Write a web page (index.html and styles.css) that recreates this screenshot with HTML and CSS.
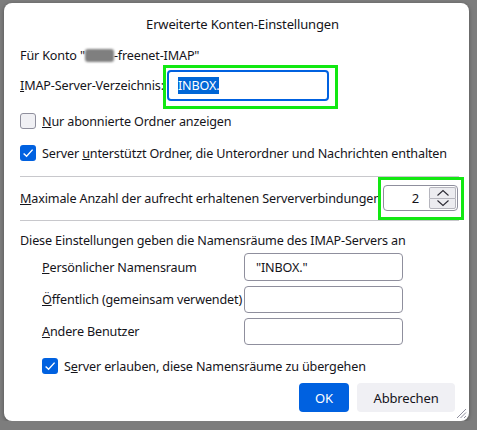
FILE: index.html
```html
<!DOCTYPE html>
<html>
<head>
    <title>Erweiterte Konten-Einstellungen</title>
    <link rel="stylesheet" href="styles.css">
</head>
<body>
    <div class="dialog">
        <div class="title">Erweiterte Konten-Einstellungen</div>

        <div class="row konto">Für Konto "<span class="blurred"></span>-freenet-IMAP"</div>

        <div class="row imap">
            <label class="imap-label"><u>I</u>MAP-Server-Verzeichnis:</label>
            <span class="marked marked-dir">
                <span class="text-input focused"><span class="selection">INBOX.</span></span>
            </span>
        </div>

        <div class="row check-row first">
            <span class="checkbox"></span>
            <span><u>N</u>ur abonnierte Ordner anzeigen</span>
        </div>

        <div class="row check-row second">
            <span class="checkbox checked">
                <svg viewBox="0 0 16 16" width="16" height="16"><path d="M3.6 8.4 L6.6 11.3 L12.6 4.6" fill="none" stroke="#fff" stroke-width="1.4"/></svg>
            </span>
            <span>Server <u>u</u>nterstützt Ordner, die Unterordner und Nachrichten enthalten</span>
        </div>

        <div class="separator first-sep"></div>

        <div class="row max-row">
            <span><u>M</u>aximale Anzahl der aufrecht erhaltenen Serververbindungen</span>
            <span class="marked marked-spin">
                <span class="spin">
                    <span class="spin-value">2</span>
                    <span class="spin-buttons">
                        <span class="spin-btn up">
                            <svg viewBox="0 0 14 8" width="14" height="8"><path d="M1.5 6.5 L7 1.5 L12.5 6.5" fill="none" stroke="#2b2a33" stroke-width="1.1"/></svg>
                        </span>
                        <span class="spin-btn down">
                            <svg viewBox="0 0 14 8" width="14" height="8"><path d="M1.5 1.5 L7 6.5 L12.5 1.5" fill="none" stroke="#2b2a33" stroke-width="1.1"/></svg>
                        </span>
                    </span>
                </span>
            </span>
        </div>

        <div class="separator second-sep"></div>

        <div class="row diese">Diese Einstellungen geben die Namensräume des IMAP-Servers an</div>

        <div class="namespaces">
            <label><u>P</u>ersönlicher Namensraum</label>
            <span class="text-input">"INBOX."</span>
            <label><u>Ö</u>ffentlich (gemeinsam verwendet)</label>
            <span class="text-input"></span>
            <label><u>A</u>ndere Benutzer</label>
            <span class="text-input"></span>
        </div>

        <div class="row check-row third">
            <span class="checkbox checked">
                <svg viewBox="0 0 16 16" width="16" height="16"><path d="M3.6 8.4 L6.6 11.3 L12.6 4.6" fill="none" stroke="#fff" stroke-width="1.4"/></svg>
            </span>
            <span>S<u>e</u>rver erlauben, diese Namensräume zu übergehen</span>
        </div>

        <div class="buttons">
            <button class="primary">OK</button>
            <button>Abbrechen</button>
        </div>

        <svg class="grip" viewBox="0 0 12 12" width="12" height="12">
            <path d="M11 2 L2 11 M11 5.5 L5.5 11 M11 9 L9 11" stroke="#8f8f9d" stroke-width="1"/>
        </svg>
    </div>
</body>
</html>
```

FILE: styles.css
```css
body {
    margin: 0;
    background: #7d7d7d;
    font-family: 'Noto Sans', 'Segoe UI', sans-serif;
    font-size: 12.6px;
    letter-spacing: -0.15px;
    color: #15141a;
}

.dialog {
    position: relative;
    box-sizing: border-box;
    margin: 3px 0 0 4px;
    width: 465px;
    height: 418px;
    padding: 0 10px 9px 16px;
    background: #fff;
    border-radius: 8px;
    box-shadow: 0 1px 4px rgba(0, 0, 0, 0.35);
    display: flex;
    flex-direction: column;
}

.title {
    height: 42px;
    display: flex;
    align-items: center;
    justify-content: center;
    font-size: 13px;
    margin-right: -6px;
}

.row {
    display: flex;
    align-items: center;
    white-space: nowrap;
}

.konto {
    height: 20px;
}

.blurred {
    display: inline-block;
    width: 29px;
    height: 13px;
    background: #7f7f7f;
    border-radius: 3px;
    filter: blur(1px);
    vertical-align: middle;
}

.imap {
    height: 31px;
    margin: 5px 0;
}

.imap-label {
    width: 147px;
}

/* green annotation frames */
.marked {
    position: relative;
    display: inline-flex;
}

.marked::after {
    content: '';
    position: absolute;
    border: 3px solid #12e812;
}

.marked-dir::after {
    left: -4px;
    top: -5px;
    right: -9px;
    bottom: -8px;
}

.marked-spin::after {
    left: -5px;
    top: -8px;
    right: -6px;
    bottom: -9px;
}

.text-input {
    box-sizing: border-box;
    display: flex;
    align-items: center;
    width: 159px;
    height: 28px;
    padding: 0 11px;
    border: 1px solid #8f8f9d;
    border-radius: 4px;
    background: #fff;
}

.text-input.focused {
    width: 162px;
    height: 31px;
    padding-left: 9px;
    border: 2px solid #0061e0;
}

.selection {
    background: #0066d6;
    color: #fff;
    line-height: 17px;
}

.check-row {
    gap: 6px;
}

.check-row.first {
    height: 30px;
}

.check-row.second {
    height: 34px;
}

.checkbox {
    box-sizing: border-box;
    width: 16px;
    height: 16px;
    border: 1px solid #8f8f9d;
    border-radius: 3px;
    background: #f0f0f4;
}

.checkbox.checked {
    border: none;
    background: #0061e0;
}

.checkbox svg {
    display: block;
}

.separator {
    height: 1px;
    background: #c8c8cc;
}

.first-sep {
    margin: 6px 0 4px;
}

.second-sep {
    margin: 5px 0 0;
}

.max-row {
    height: 34px;
    justify-content: space-between;
}

.marked-spin {
    margin-right: 1px;
}

.spin {
    box-sizing: border-box;
    display: flex;
    align-items: center;
    width: 75px;
    height: 26px;
    border: 1px solid #8f8f9d;
    border-radius: 4px;
    padding: 1px;
}

.spin-value {
    flex: 1;
    text-align: right;
    padding-right: 10px;
    font-size: 13px;
}

.spin-buttons {
    display: flex;
    flex-direction: column;
    width: 27px;
    height: 22px;
}

.spin-btn {
    flex: 1;
    display: flex;
    align-items: center;
    justify-content: center;
    background: #ececf0;
    border: 1px solid #b5b5bd;
}

.spin-btn.up {
    border-bottom: none;
    border-radius: 2px 2px 0 0;
}

.spin-btn.down {
    border-radius: 0 0 2px 2px;
}

.diese {
    height: 20px;
    margin-top: 9px;
}

.namespaces {
    display: grid;
    grid-template-columns: 202px 159px;
    grid-template-rows: 28px 27px 27px;
    row-gap: 5px;
    margin-top: 3px;
    padding-left: 22px;
    align-items: center;
    white-space: nowrap;
}

.namespaces .text-input {
    height: 100%;
}

.check-row.third {
    height: 22px;
    margin-top: 10px;
    padding-left: 22px;
}

.buttons {
    display: flex;
    justify-content: flex-end;
    gap: 8px;
    margin-top: 6px;
    padding-right: 4px;
}

button {
    height: 29px;
    width: 98px;
    border: none;
    border-radius: 4px;
    background: #f0f0f4;
    color: #15141a;
    font-family: inherit;
    font-size: 13px;
    letter-spacing: -0.15px;
}

button.primary {
    width: 50px;
    background: #0061e0;
    color: #fff;
}

.grip {
    position: absolute;
    right: 2px;
    bottom: 2px;
}
```
